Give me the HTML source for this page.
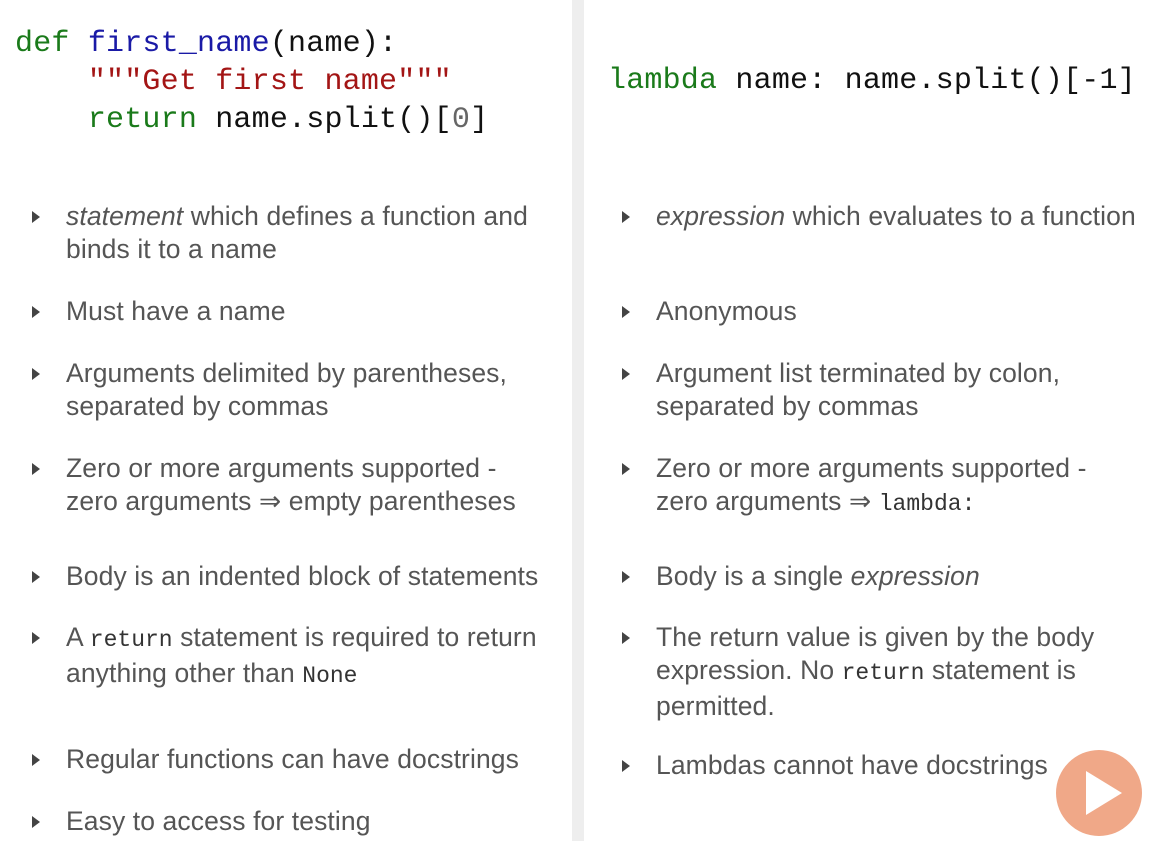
<!DOCTYPE html>
<html><head><meta charset="utf-8"><style>
html,body{margin:0;padding:0;width:1151px;height:841px;overflow:hidden;background:#fff;}
body{position:relative;font-family:"Liberation Sans",sans-serif;}
.div{position:absolute;left:572px;top:0;width:12px;height:841px;background:#eeeeee;}
.code{position:absolute;font-family:"Liberation Mono","DejaVu Sans Mono",monospace;font-size:30px;line-height:38px;color:#111;white-space:pre;letter-spacing:0.2px;}
.k{color:#1a7a1a}.f{color:#1a1aa6}.s{color:#a31515}.n{color:#666}
.it{position:absolute;font-size:26.5px;line-height:33px;color:#555;letter-spacing:0.1px;white-space:nowrap;}
.it::before{content:"";position:absolute;left:-34px;top:11px;border-left:8px solid #444;border-top:6px solid transparent;border-bottom:6px solid transparent;}
.l{left:66px;}.r{left:656px;}
.m{font-family:"Liberation Mono",monospace;font-size:23px;color:#333;letter-spacing:0;}
.play{position:absolute;left:1056px;top:750px;width:86px;height:86px;border-radius:50%;background:#f0a888;}
.play::after{content:"";position:absolute;left:30px;top:21px;border-left:36px solid #fff;border-top:22px solid transparent;border-bottom:22px solid transparent;}
</style></head><body>
<div class="div"></div>
<div class="code" style="left:15px;top:25px"><span class="k">def</span> <span class="f">first_name</span>(name):
    <span class="s">"""Get first name"""</span>
    <span class="k">return</span> name.split()[<span class="n">0</span>]</div>
<div class="code" style="left:608px;top:62px"><span class="k">lambda</span> name: name.split()[-1]</div>

<div class="it l" style="top:200px"><i>statement</i> which defines a function and<br>binds it to a name</div>
<div class="it l" style="top:295px">Must have a name</div>
<div class="it l" style="top:357px">Arguments delimited by parentheses,<br>separated by commas</div>
<div class="it l" style="top:452px">Zero or more arguments supported -<br>zero arguments ⇒ empty parentheses</div>
<div class="it l" style="top:560px">Body is an indented block of statements</div>
<div class="it l" style="top:621px">A <span class="m">return</span> statement is required to return<br>anything other than <span class="m">None</span></div>
<div class="it l" style="top:743px">Regular functions can have docstrings</div>
<div class="it l" style="top:805px">Easy to access for testing</div>

<div class="it r" style="top:200px"><i>expression</i> which evaluates to a function</div>
<div class="it r" style="top:295px">Anonymous</div>
<div class="it r" style="top:357px">Argument list terminated by colon,<br>separated by commas</div>
<div class="it r" style="top:452px">Zero or more arguments supported -<br>zero arguments ⇒ <span class="m">lambda:</span></div>
<div class="it r" style="top:560px">Body is a single <i>expression</i></div>
<div class="it r" style="top:621px">The return value is given by the body<br>expression. No <span class="m">return</span> statement is<br>permitted.</div>
<div class="it r" style="top:749px">Lambdas cannot have docstrings</div>
<div class="play"></div>
</body></html>
